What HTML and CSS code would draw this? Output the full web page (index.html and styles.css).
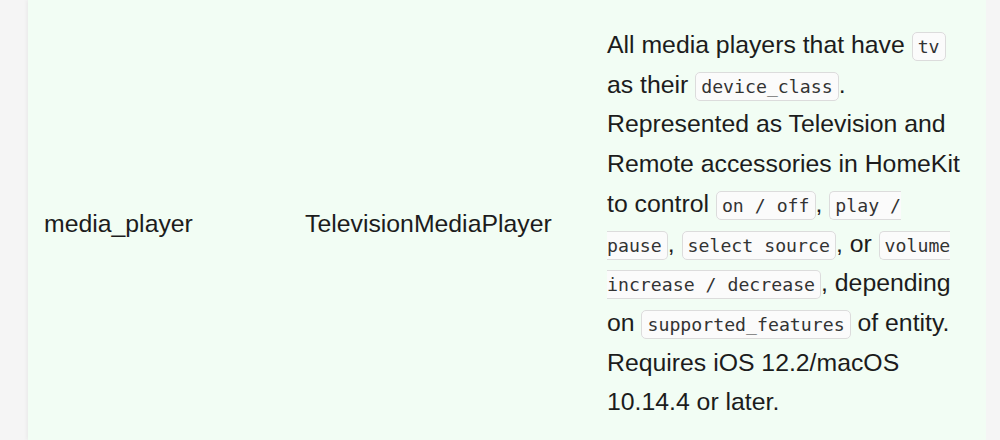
FILE: index.html
```html
<!DOCTYPE html>
<html>
<head>
<meta charset="utf-8">
<link rel="stylesheet" href="styles.css">
</head>
<body>
<div class="page">
  <table class="entities">
    <tr class="row">
      <td class="c1">media_player</td>
      <td class="c2">TelevisionMediaPlayer</td>
      <td class="c3">All media players that have <code>tv</code> as their <code>device_class</code>. Represented as Television and Remote accessories in HomeKit to control <code>on / off</code>, <code>play / pause</code>, <code>select source</code>, or <code>volume increase / decrease</code>, depending on <code>supported_features</code> of entity. Requires iOS 12.2/macOS 10.14.4 or later.</td>
    </tr>
  </table>
</div>
</body>
</html>
```
FILE: styles.css
```css
html, body {
  margin: 0;
  padding: 0;
  background: #f5f5f5;
  height: 100%;
  overflow: hidden;
}
.page {
  width: 958px;
  margin-left: 28px;
  height: 100%;
  background: #f2fdf4;
  box-shadow: -2px 0 3px rgba(0,0,0,0.04);
}
.entities {
  border-collapse: collapse;
  width: 958px;
  table-layout: fixed;
  font-family: "Liberation Sans", Arial, sans-serif;
  font-size: 24.8px;
  line-height: 39.7px;
  color: #1c1c1c;
}
.c1 { width: 229px; }
.c2 { width: 270px; }
.entities td {
  padding: 25px 16px 22px 16px;
  vertical-align: middle;
}
.entities td.c3 { padding-right: 20px; }
code {
  font-family: "DejaVu Sans Mono", monospace;
  font-size: 18.2px;
  line-height: 18px;
  color: #333;
  background: #fbfbfb;
  border: 1px solid #dcdcdc;
  border-radius: 5px;
  padding: 3px 5px;
}
```
